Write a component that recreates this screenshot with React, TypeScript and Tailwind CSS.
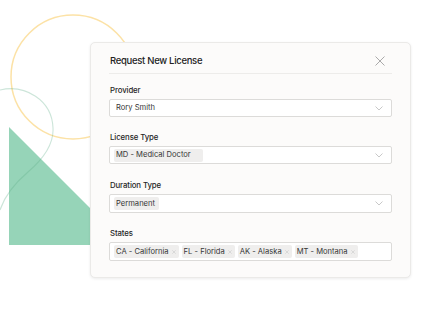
import React from "react";

type Field = {
  label: string;
  height: string;
  gapTop: string;
  content: React.ReactNode;
  chevron?: boolean;
};

function Chevron() {
  return (
    <svg width="8" height="5" viewBox="0 0 8 5" className="shrink-0">
      <polyline points="0.5,0.5 4,4 7.5,0.5" fill="none" stroke="#c2c2c2" strokeWidth="0.9" />
    </svg>
  );
}

function Chip({ text, removable, pad = "pr-[3px]" }: { text: string; removable?: boolean; pad?: string }) {
  return (
    <span
      className={`flex h-[13px] items-center gap-[3px] rounded-[2px] bg-[#efeeed] pl-[2px] text-[7.6px] leading-none text-[#363636] ${pad}`}
    >
      {text}
      {removable && (
        <svg width="4" height="4" viewBox="0 0 4 4">
          <path d="M0.3 0.3 L3.7 3.7 M3.7 0.3 L0.3 3.7" stroke="#cfcfcf" strokeWidth="0.7" />
        </svg>
      )}
    </span>
  );
}

export default function App() {
  const fields: Field[] = [
    {
      label: "Provider",
      height: "h-[18px]",
      gapTop: "mt-[11px]",
      chevron: true,
      content: <span className="pl-[2px] text-[7.6px] text-[#363636]">Rory Smith</span>,
    },
    {
      label: "License Type",
      height: "h-[18px]",
      gapTop: "mt-[15px]",
      chevron: true,
      content: <Chip text="MD - Medical Doctor" pad="pr-[12px]" />,
    },
    {
      label: "Duration Type",
      height: "h-[19px]",
      gapTop: "mt-[16px]",
      chevron: true,
      content: <Chip text="Permanent" pad="pr-[4px]" />,
    },
    {
      label: "States",
      height: "h-[19px]",
      gapTop: "mt-[15px]",
      content: (
        <div className="flex gap-[3px]">
          <Chip text="CA - California" removable />
          <Chip text="FL - Florida" removable />
          <Chip text="AK - Alaska" removable />
          <Chip text="MT - Montana" removable />
        </div>
      ),
    },
  ];

  return (
    <div className="relative h-[320px] w-[432px] overflow-hidden bg-white font-['Inter',sans-serif]">
      {/* background shapes */}
      <svg className="absolute left-0 top-0" width="432" height="320" viewBox="0 0 432 320">
        <circle cx="73" cy="77" r="62" fill="none" stroke="#fce2a6" strokeWidth="1.5" />
        <polygon points="9,127 127,245 9,245" fill="#96d4b8" />
        <path
          d="M0 90 C 25 84, 52 100, 53 128 C 54 145, 42 160, 28 172 C 15 183, 5 195, 0 210"
          fill="none"
          stroke="#5fae8a"
          strokeOpacity="0.32"
          strokeWidth="1.1"
        />
      </svg>

      {/* card */}
      <div className="relative ml-[90px] mt-[42px] h-[236px] w-[321px] rounded-[5px] border border-[#ebeae8] bg-[#fcfbfa] px-[18px] pt-[12px] shadow-[0_1px_3px_rgba(0,0,0,0.08)]">
        <div className="flex items-center justify-between border-b border-[#edecea] pb-[6px] pl-px">
          <span className="text-[9.5px] font-medium leading-[12px] tracking-[-0.3px] text-[#222]">
            Request New License
          </span>
          <svg width="10" height="10" viewBox="0 0 10 10" className="mr-[7px]">
            <path d="M0.5 0.5 L9.5 9.5 M9.5 0.5 L0.5 9.5" stroke="#a0a0a0" strokeWidth="0.9" />
          </svg>
        </div>

        {fields.map((f) => (
          <div key={f.label} className={f.gapTop}>
            <div className="pl-px text-[7.8px] font-medium leading-[10px] tracking-[-0.1px] text-[#262626]">
              {f.label}
            </div>
            <div
              className={`mt-[4px] flex items-center justify-between rounded-[2px] border border-[#dcdbd9] bg-white pl-[4px] pr-[8px] ${f.height}`}
            >
              {f.content}
              {f.chevron && <Chevron />}
            </div>
          </div>
        ))}
      </div>
    </div>
  );
}
